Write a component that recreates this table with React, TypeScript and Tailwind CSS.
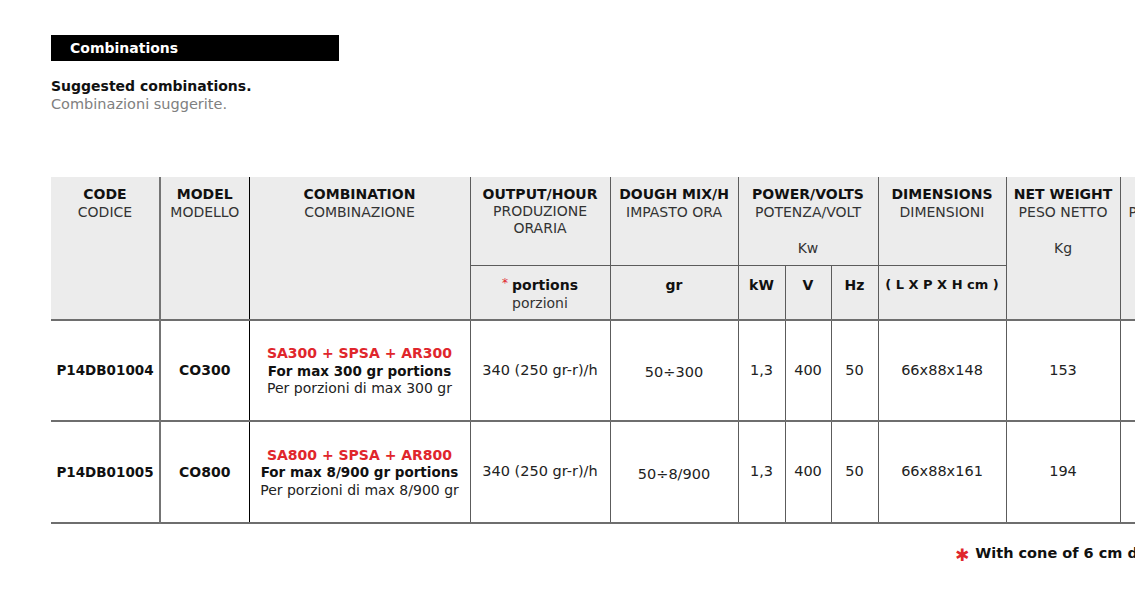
import React from "react";

const font = "font-['DejaVu_Sans','Liberation_Sans',sans-serif]";

const vGrey = "border-l border-l-[#5c5c5c]";
const vThick = "border-l-2 border-l-[#747474]";
const vBlack = "border-l border-l-black";

function HeadCell({
  en,
  it,
  extra,
  className = "",
  rowSpan,
  colSpan,
}: {
  en: string;
  it?: string;
  extra?: string;
  className?: string;
  rowSpan?: number;
  colSpan?: number;
}) {
  return (
    <th
      rowSpan={rowSpan}
      colSpan={colSpan}
      className={`align-top pt-[8px] text-center font-normal leading-[18px] whitespace-nowrap ${className}`}
    >
      <div className="font-bold text-[14px] text-[#111]">{en}</div>
      {it && <div className="text-[14px] text-[#333]">{it}</div>}
      {extra && <div className="mt-[18px] text-[14px] text-[#333]">{extra}</div>}
    </th>
  );
}

const rows = [
  {
    code: "P14DB01004",
    model: "CO300",
    combo: "SA300 + SPSA + AR300",
    en: "For max 300 gr portions",
    it: "Per porzioni di max 300 gr",
    output: "340 (250 gr-r)/h",
    dough: "50÷300",
    kw: "1,3",
    v: "400",
    hz: "50",
    dim: "66x88x148",
    weight: "153",
  },
  {
    code: "P14DB01005",
    model: "CO800",
    combo: "SA800 + SPSA + AR800",
    en: "For max 8/900 gr portions",
    it: "Per porzioni di max 8/900 gr",
    output: "340 (250 gr-r)/h",
    dough: "50÷8/900",
    kw: "1,3",
    v: "400",
    hz: "50",
    dim: "66x88x161",
    weight: "194",
  },
];

export default function App() {
  return (
    <div className={`w-[1135px] h-[615px] overflow-hidden bg-white ${font} text-[#111]`}>
      <div className="pl-[51px] pt-[35px]">
        <div className="w-[288px] h-[26px] bg-black pl-[19px] flex items-center">
          <span className="text-white font-bold text-[14px] leading-none">Combinations</span>
        </div>

        <div className="mt-[16px] leading-[18px]">
          <p className="font-bold text-[14px] text-[#111]">Suggested combinations.</p>
          <p className="text-[14.5px] text-[#808080]">Combinazioni suggerite.</p>
        </div>

        <table className="mt-[64px] table-fixed border-collapse w-[1169px]">
          <colgroup>
            <col className="w-[109px]" />
            <col className="w-[89px]" />
            <col className="w-[221px]" />
            <col className="w-[140px]" />
            <col className="w-[128px]" />
            <col className="w-[47px]" />
            <col className="w-[46px]" />
            <col className="w-[47px]" />
            <col className="w-[128px]" />
            <col className="w-[114px]" />
            <col className="w-[100px]" />
          </colgroup>
          <thead className="bg-[#ececec]">
            <tr className="h-[88px]">
              <HeadCell en="CODE" it="CODICE" rowSpan={2} />
              <HeadCell en="MODEL" it="MODELLO" rowSpan={2} className={vThick} />
              <HeadCell en="COMBINATION" it="COMBINAZIONE" rowSpan={2} className={vBlack} />
              <th className={`align-top pt-[8px] text-center font-normal leading-[17px] ${vGrey}`}>
                <div className="font-bold text-[14px] text-[#111] leading-[18px]">OUTPUT/HOUR</div>
                <div className="text-[14px] text-[#333]">PRODUZIONE</div>
                <div className="text-[14px] text-[#333]">ORARIA</div>
              </th>
              <HeadCell en="DOUGH MIX/H" it="IMPASTO ORA" className={vGrey} />
              <HeadCell en="POWER/VOLTS" it="POTENZA/VOLT" extra="Kw" colSpan={3} className={vGrey} />
              <HeadCell en="DIMENSIONS" it="DIMENSIONI" className={vGrey} />
              <HeadCell en="NET WEIGHT" it="PESO NETTO" extra="Kg" rowSpan={2} className={vGrey} />
              <th
                rowSpan={2}
                className={`align-top pt-[8px] pl-[8px] text-left font-normal leading-[18px] whitespace-nowrap ${vGrey}`}
              >
                <div className="font-bold text-[14px] text-[#111] pl-[16px]">PRICE</div>
                <div className="text-[14px] text-[#333]">PREZZO LISTINO</div>
              </th>
            </tr>
            <tr className="h-[55px]">
              <th className={`align-top pt-[10px] text-center font-normal leading-[18px] border-t border-t-[#5c5c5c] ${vGrey}`}>
                <div className="text-[14px] font-bold text-[#111]">
                  <span className="text-[#e0262c] font-normal text-[12px] align-top relative top-[-2px] mr-[4px]">*</span>
                  portions
                </div>
                <div className="text-[14px] text-[#333]">porzioni</div>
              </th>
              {["gr", "kW", "V", "Hz", "( L X P X H cm )"].map((t) => (
                <th
                  key={t}
                  className={`align-top pt-[10px] text-center font-bold leading-[18px] whitespace-nowrap border-t border-t-[#5c5c5c] ${vGrey} ${
                    t.startsWith("(") ? "text-[13px]" : "text-[14px]"
                  }`}
                >
                  {t}
                </th>
              ))}
            </tr>
          </thead>
          <tbody>
            {rows.map((r, i) => (
              <tr
                key={r.code}
                className={`${i === 0 ? "h-[101px]" : "h-[102px]"} border-t-2 border-t-[#6e6e6e] border-b-2 border-b-[#6e6e6e]`}
              >
                <td className="text-center align-middle font-bold text-[13.5px]">{r.code}</td>
                <td className={`text-center align-middle font-bold text-[14px] ${vThick}`}>{r.model}</td>
                <td className={`text-center align-middle leading-[17.5px] whitespace-nowrap pt-[2px] ${vBlack}`}>
                  <div className="font-bold text-[14px] text-[#e0262c]">{r.combo}</div>
                  <div className="font-bold text-[13.5px]">{r.en}</div>
                  <div className="text-[14px] text-[#222]">{r.it}</div>
                </td>
                <td className={`text-center align-middle text-[14.5px] text-[#222] whitespace-nowrap ${vGrey}`}>{r.output}</td>
                <td className={`text-center align-middle text-[14.5px] text-[#222] pt-[5px] ${vGrey}`}>{r.dough}</td>
                <td className={`text-center align-middle text-[14.5px] text-[#222] ${vGrey}`}>{r.kw}</td>
                <td className={`text-center align-middle text-[14.5px] text-[#222] ${vGrey}`}>{r.v}</td>
                <td className={`text-center align-middle text-[14.5px] text-[#222] ${vGrey}`}>{r.hz}</td>
                <td className={`text-center align-middle text-[14.5px] text-[#222] ${vGrey}`}>{r.dim}</td>
                <td className={`text-center align-middle text-[14.5px] text-[#222] ${vGrey}`}>{r.weight}</td>
                <td className={vGrey}></td>
              </tr>
            ))}
          </tbody>
        </table>

        <div className="mt-[20px] ml-[904px] flex items-center whitespace-nowrap">
          <span className="text-[#e0262c] text-[17px] leading-none mr-[6px] relative top-[2px]">✱</span>
          <span className="font-bold text-[14.5px] leading-[18px]">With cone of 6 cm diameter</span>
        </div>
      </div>
    </div>
  );
}
